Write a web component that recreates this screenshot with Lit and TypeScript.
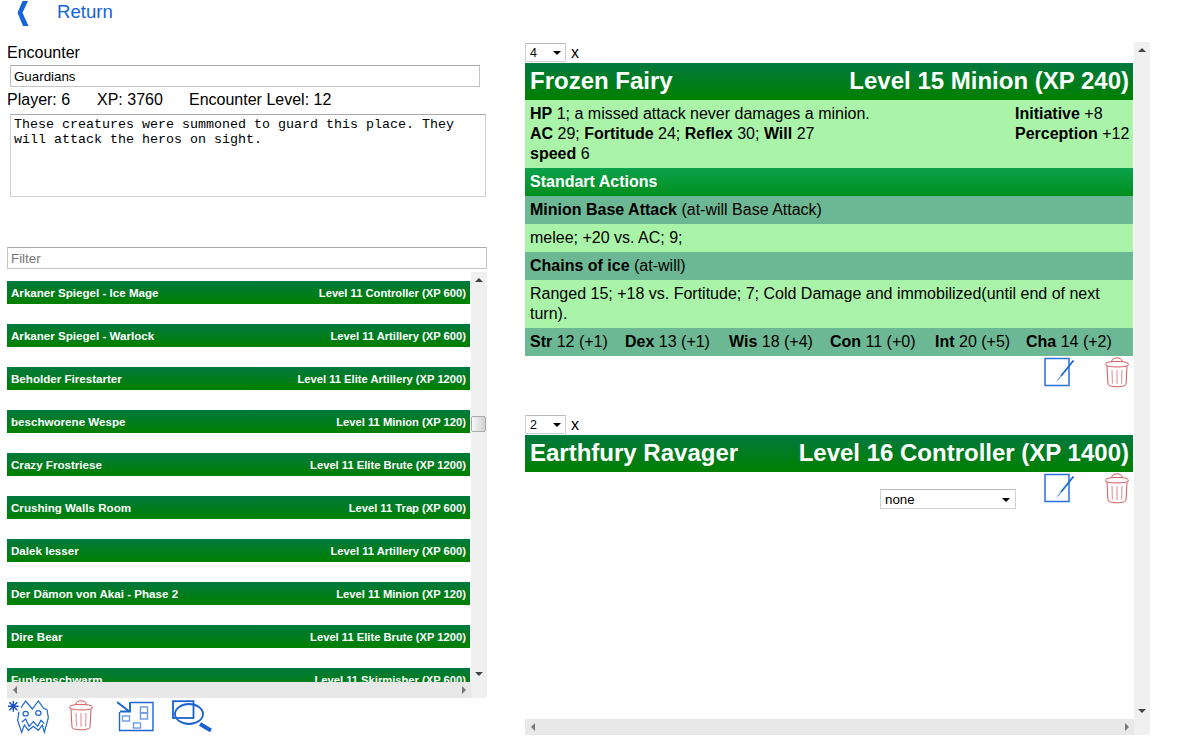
import { LitElement, html, css, svg } from "lit";
import { customElement } from "lit/decorators.js";

const LIST: [string, string][] = [
  ["Arkaner Spiegel - Ice Mage", "Level 11 Controller (XP 600)"],
  ["Arkaner Spiegel - Warlock", "Level 11 Artillery (XP 600)"],
  ["Beholder Firestarter", "Level 11 Elite Artillery (XP 1200)"],
  ["beschworene Wespe", "Level 11 Minion (XP 120)"],
  ["Crazy Frostriese", "Level 11 Elite Brute (XP 1200)"],
  ["Crushing Walls Room", "Level 11 Trap (XP 600)"],
  ["Dalek lesser", "Level 11 Artillery (XP 600)"],
  ["Der Dämon von Akai - Phase 2", "Level 11 Minion (XP 120)"],
  ["Dire Bear", "Level 11 Elite Brute (XP 1200)"],
  ["Funkenschwarm", "Level 11 Skirmisher (XP 600)"],
];

const trash = html`<svg class="ic" width="24" height="31" viewBox="0 0 24 31" fill="none" stroke="#d9565e" stroke-width="1">
  <path d="M0.7 7 C0.7 5.2 7 4.4 12 4.4 C17 4.4 23.3 5.2 23.3 7 L23 8.6 C19 10.4 5 10.4 1 8.6Z"/>
  <path d="M6.7 4.6 C6.7 -0.4 17.3 -0.4 17.3 4.6"/>
  <path d="M2 9.5 L3 27.5 C5 30.6 19 30.6 21 27.5 L22 9.5"/>
  <path d="M7 13 L7.4 26.5 M12 13 L12 27 M17 13 L16.6 26.5" stroke="#e08a8f"/>
</svg>`;

const edit = html`<svg class="ic" width="30" height="30" viewBox="0 0 30 30" fill="none">
  <path d="M1 1.5 H25 V28.5 H1Z" stroke="#2a6fdb" stroke-width="1.5"/>
  <path d="M29.5 3.5 L17 19" stroke="#1e66d0" stroke-width="1.8"/>
  <path d="M17 19 L13.5 23.5" stroke="#5e95e4" stroke-width="1.2"/>
  <path d="M13.5 23.5 L12.5 25" stroke="#b5cff3" stroke-width="1"/>
</svg>`;

const monster = svg`<svg class="ic" width="42" height="34" viewBox="9 9 126 102" fill="none" stroke="#1a66d6" stroke-width="3.6">
  <path d="M9 28 H41 M25 12 V44 M13 16 L37 40 M37 16 L13 40" stroke-width="4.5" stroke="#1553c4"/>
  <path d="M42 44 L38 70 L50 106 L58 84 L70 100 L85 88 L100 100 L112 84 L118 106 L130 62 L126 38 L116 34 L100 12 L82 36 L62 12 L48 32"/>
  <ellipse cx="62" cy="50" rx="8" ry="7"/><ellipse cx="100" cy="48" rx="8" ry="7"/>
  <path d="M50 76 L62 66 L72 88 L85 74 L98 88 L108 70 L118 80"/>
</svg>`;

const mapIcon = svg`<svg class="ic" width="38" height="34" viewBox="0 0 38 34" fill="none" stroke="#1e66d0" stroke-width="1.4">
  <path d="M14 2.5 H36 V30.5 H2.5 V12"/>
  <path d="M0 2 L13 12 M13 2 V11.5 H3" stroke-width="1.9"/>
  <rect x="23.5" y="7" width="7" height="6" stroke="#6d9ae0"/><rect x="23.5" y="13" width="7" height="6" stroke="#6d9ae0"/>
  <rect x="5.5" y="16" width="7" height="5" stroke="#6d9ae0"/><rect x="16.5" y="23" width="7" height="5" stroke="#6d9ae0"/>
</svg>`;

const searchIcon = svg`<svg class="ic" width="42" height="34" viewBox="0 0 42 34" fill="none" stroke="#1a62d2">
  <rect x="1" y="1.2" width="20.5" height="16.8" stroke-width="1.8"/>
  <ellipse cx="17" cy="14" rx="14" ry="10" stroke-width="1.8"/>
  <path d="M28 24 L39 30.5" stroke-width="3.8"/>
</svg>`;

@customElement("app-root")
export class AppRoot extends LitElement {
  static styles = css`
    :host { display: block; width: 1194px; height: 741px; overflow: hidden; background: #fff; color: #000;
      font-family: "Liberation Sans", Arial, sans-serif; font-size: 16px; }
    * { box-sizing: border-box; }
    .ic { display: block; flex: none; }
    .top { height: 42px; display: flex; align-items: flex-start; padding-left: 17px; color: #1464dc; }
    .ret { margin-left: 26px; font-size: 18.6px; line-height: 23px; }
    .main { display: flex; align-items: flex-start; }
    .left { width: 480px; margin-left: 7px; flex: none; }
    .right { margin-left: 38px; flex: none; display: flex; }
    .lbl { line-height: 20px; padding-top: 1px; }
    input.name { display: block; margin: 2px 0 0 3px; width: 470px; height: 22px; border: 1px solid #c4c4c4; border-top-color: #a9a9a9;
      padding: 0 3px; font: 13.33px "Liberation Sans", Arial, sans-serif; color: #000; background: #fff; outline: none; }
    .stats { display: flex; line-height: 20px; margin-top: 3px; height: 24px; }
    .stats span:nth-child(1) { width: 90px; } .stats span:nth-child(2) { width: 92px; }
    textarea { display: block; margin-left: 3px; width: 476px; height: 83px; border: 1px solid #d0d0d0; border-top-color: #a9a9a9; padding: 2px 3px;
      font: 13.33px/15px "Liberation Mono", "Courier New", monospace; resize: none; outline: none; color: #000; overflow: hidden; }
    input.filter { display: block; margin-top: 50px; width: 480px; height: 22px; border: 1px solid #c4c4c4; border-top-color: #a9a9a9; padding: 0 3px;
      font: 13.33px "Liberation Sans", Arial, sans-serif; outline: none; }
    input.filter::placeholder { color: #757575; }
    .listwrap { margin-top: 3px; display: grid; grid-template-columns: 464px 16px; grid-template-rows: 410px 16px; }
    .list { overflow: hidden; padding-top: 9px; display: flex; flex-direction: column; gap: 20px; width: 463px; }
    .bar { height: 23px; flex: none; display: flex; justify-content: space-between; align-items: center; padding: 0 4px;
      background: linear-gradient(#00793f, #008000); color: #fff; font-weight: bold; }
    .bar .n { font-size: 11.6px; }
    .bar .l { font-size: 11.2px; }
    .vs { background: #f0f0f0; position: relative; }
    .hs { background: #e8e8e8; position: relative; }
    .corner { background: #f0f0f0; }
    .up, .down, .lt, .rt { position: absolute; width: 0; height: 0; }
    .up { top: 6px; left: 4px; border: 4px solid transparent; border-top: 0; border-bottom: 4px solid #444; }
    .down { bottom: 6px; left: 4px; border: 4px solid transparent; border-bottom: 0; border-top: 4px solid #444; }
    .lt { left: 6px; top: 4px; border: 4px solid transparent; border-left: 0; border-right: 4px solid #777; }
    .rt { right: 5px; top: 4px; border: 4px solid transparent; border-right: 0; border-left: 4px solid #777; }
    .thumb { position: absolute; left: 0; top: 144px; width: 15px; height: 16px; border: 1px solid #aaa; border-radius: 2px; background: linear-gradient(90deg, #f8f8f8, #d0d0d4); }
    .tools { display: flex; margin-top: 2px; height: 37px; padding-left: 1px; align-items: flex-start; }
    .tools .t2 { margin-left: 19px; } .tools .t3 { margin-left: 24px; } .tools .t4 { margin-left: 17px; }
    .pane { width: 609px; height: 677px; overflow: hidden; padding-right: 1px; }
    .vs2 { width: 16px; height: 677px; }
    .hs2 { height: 16px; width: 625px; display: grid; grid-template-columns: 609px 16px; }
    .rwrap { display: flex; flex-direction: column; }
    .rtop { display: flex; }
    .qty { display: flex; align-items: center; height: 21px; gap: 5px; }
    .sel { width: 41px; height: 19px; border: 1px solid #d0d0d0; border-top-color: #bbb; background: #fff; font-size: 12.5px; padding-left: 4px; display: flex; align-items: center; position: relative; }
    .caret { position: absolute; right: 4px; top: 7px; border: 4px solid transparent; border-bottom: 0; border-top: 4px solid #000; }
    .head { height: 37px; display: flex; justify-content: space-between; align-items: center; padding: 0 4px 2px 5px;
      background: linear-gradient(#00793f, #008000); color: #fff; font-size: 24px; font-weight: bold; }
    .body { background: #aaf4aa; display: flex; justify-content: space-between; padding: 4px 3px 4px 5px; line-height: 20px; height: 68px; }
    .side { width: 115px; }
    .sub { height: 28px; background: linear-gradient(#0ca24c, #008f1e); color: #fff; font-weight: bold; padding: 0 5px; display: flex; align-items: center; }
    .r1 { background: #6db894; padding: 4px 5px; line-height: 20px; min-height: 28px; }
    .r2 { background: #aaf4aa; padding: 4px 5px; line-height: 20px; min-height: 28px; }
    .st { display: grid; grid-template-columns: 95px 104px 101px 105px 91px auto; white-space: nowrap; }
    .acts { display: flex; justify-content: flex-end; height: 58px; padding-top: 1px; align-items: flex-start; }
    .acts .del { margin-left: 31px; margin-right: 4px; }
    .acts2 { display: flex; justify-content: flex-end; align-items: flex-start; padding-top: 1px; position: relative; }
    .acts2 .del { margin-left: 31px; margin-right: 4px; }
    .sel2 { position: absolute; left: 355px; top: 17px; width: 136px; height: 20px; border: 1px solid #d0d0d0; border-top-color: #bbb; background: #fff; font-size: 13.33px; padding-left: 4px; display: flex; align-items: center; }
    .sel2 .caret { top: 8px; right: 5px; }
  `;

  render() {
    return html`
      <div class="top">
        <svg width="14" height="26" viewBox="0 0 14 26"><path d="M5.5 1 L11 1 L5.5 12.7 L11.5 26 L6 26 L0.5 12.7 Z" fill="#1464dc"/></svg>
        <div class="ret">Return</div>
      </div>
      <div class="main">
        <div class="left">
          <div class="lbl">Encounter</div>
          <input class="name" .value=${"Guardians"} />
          <div class="stats"><span>Player: 6</span><span>XP: 3760</span><span>Encounter Level: 12</span></div>
          <textarea .value=${"These creatures were summoned to guard this place. They will attack the heros on sight."}></textarea>
          <input class="filter" placeholder="Filter" />
          <div class="listwrap">
            <div class="list">
              ${LIST.map(([a, b]) => html`<div class="bar"><span class="n">${a}</span><span class="l">${b}</span></div>`)}
            </div>
            <div class="vs"><i class="up"></i><i class="thumb"></i><i class="down"></i></div>
            <div class="hs"><i class="lt"></i><i class="rt"></i></div>
            <div class="corner"></div>
          </div>
          <div class="tools">
            ${monster}
            <span class="t2">${trash}</span>
            <span class="t3">${mapIcon}</span>
            <span class="t4">${searchIcon}</span>
          </div>
        </div>
        <div class="right rwrap">
          <div class="rtop">
            <div class="pane">
              <div class="qty"><div class="sel">4<i class="caret"></i></div><span>x</span></div>
              <div class="head"><span>Frozen Fairy</span><span>Level 15 Minion (XP 240)</span></div>
              <div class="body">
                <div>
                  <div><b>HP</b> 1; a missed attack never damages a minion.</div>
                  <div><b>AC</b> 29; <b>Fortitude</b> 24; <b>Reflex</b> 30; <b>Will</b> 27</div>
                  <div><b>speed</b> 6</div>
                </div>
                <div class="side">
                  <div><b>Initiative</b> +8</div>
                  <div><b>Perception</b> +12</div>
                </div>
              </div>
              <div class="sub">Standart Actions</div>
              <div class="r1"><b>Minion Base Attack</b> (at-will Base Attack)</div>
              <div class="r2">melee; +20 vs. AC; 9;</div>
              <div class="r1"><b>Chains of ice</b> (at-will)</div>
              <div class="r2">Ranged 15; +18 vs. Fortitude; 7; Cold Damage and immobilized(until end of next turn).</div>
              <div class="r1 st">
                <span><b>Str</b> 12 (+1)</span><span><b>Dex</b> 13 (+1)</span><span><b>Wis</b> 18 (+4)</span>
                <span><b>Con</b> 11 (+0)</span><span><b>Int</b> 20 (+5)</span><span><b>Cha</b> 14 (+2)</span>
              </div>
              <div class="acts">${edit}<span class="del">${trash}</span></div>
              <div class="qty"><div class="sel">2<i class="caret"></i></div><span>x</span></div>
              <div class="head"><span>Earthfury Ravager</span><span>Level 16 Controller (XP 1400)</span></div>
              <div class="acts2">
                <div class="sel2">none<i class="caret"></i></div>
                ${edit}<span class="del">${trash}</span>
              </div>
            </div>
            <div class="vs vs2"><i class="up"></i><i class="down"></i></div>
          </div>
          <div class="hs2"><div class="hs"><i class="lt"></i><i class="rt"></i></div><div class="corner"></div></div>
        </div>
      </div>
    `;
  }
}
